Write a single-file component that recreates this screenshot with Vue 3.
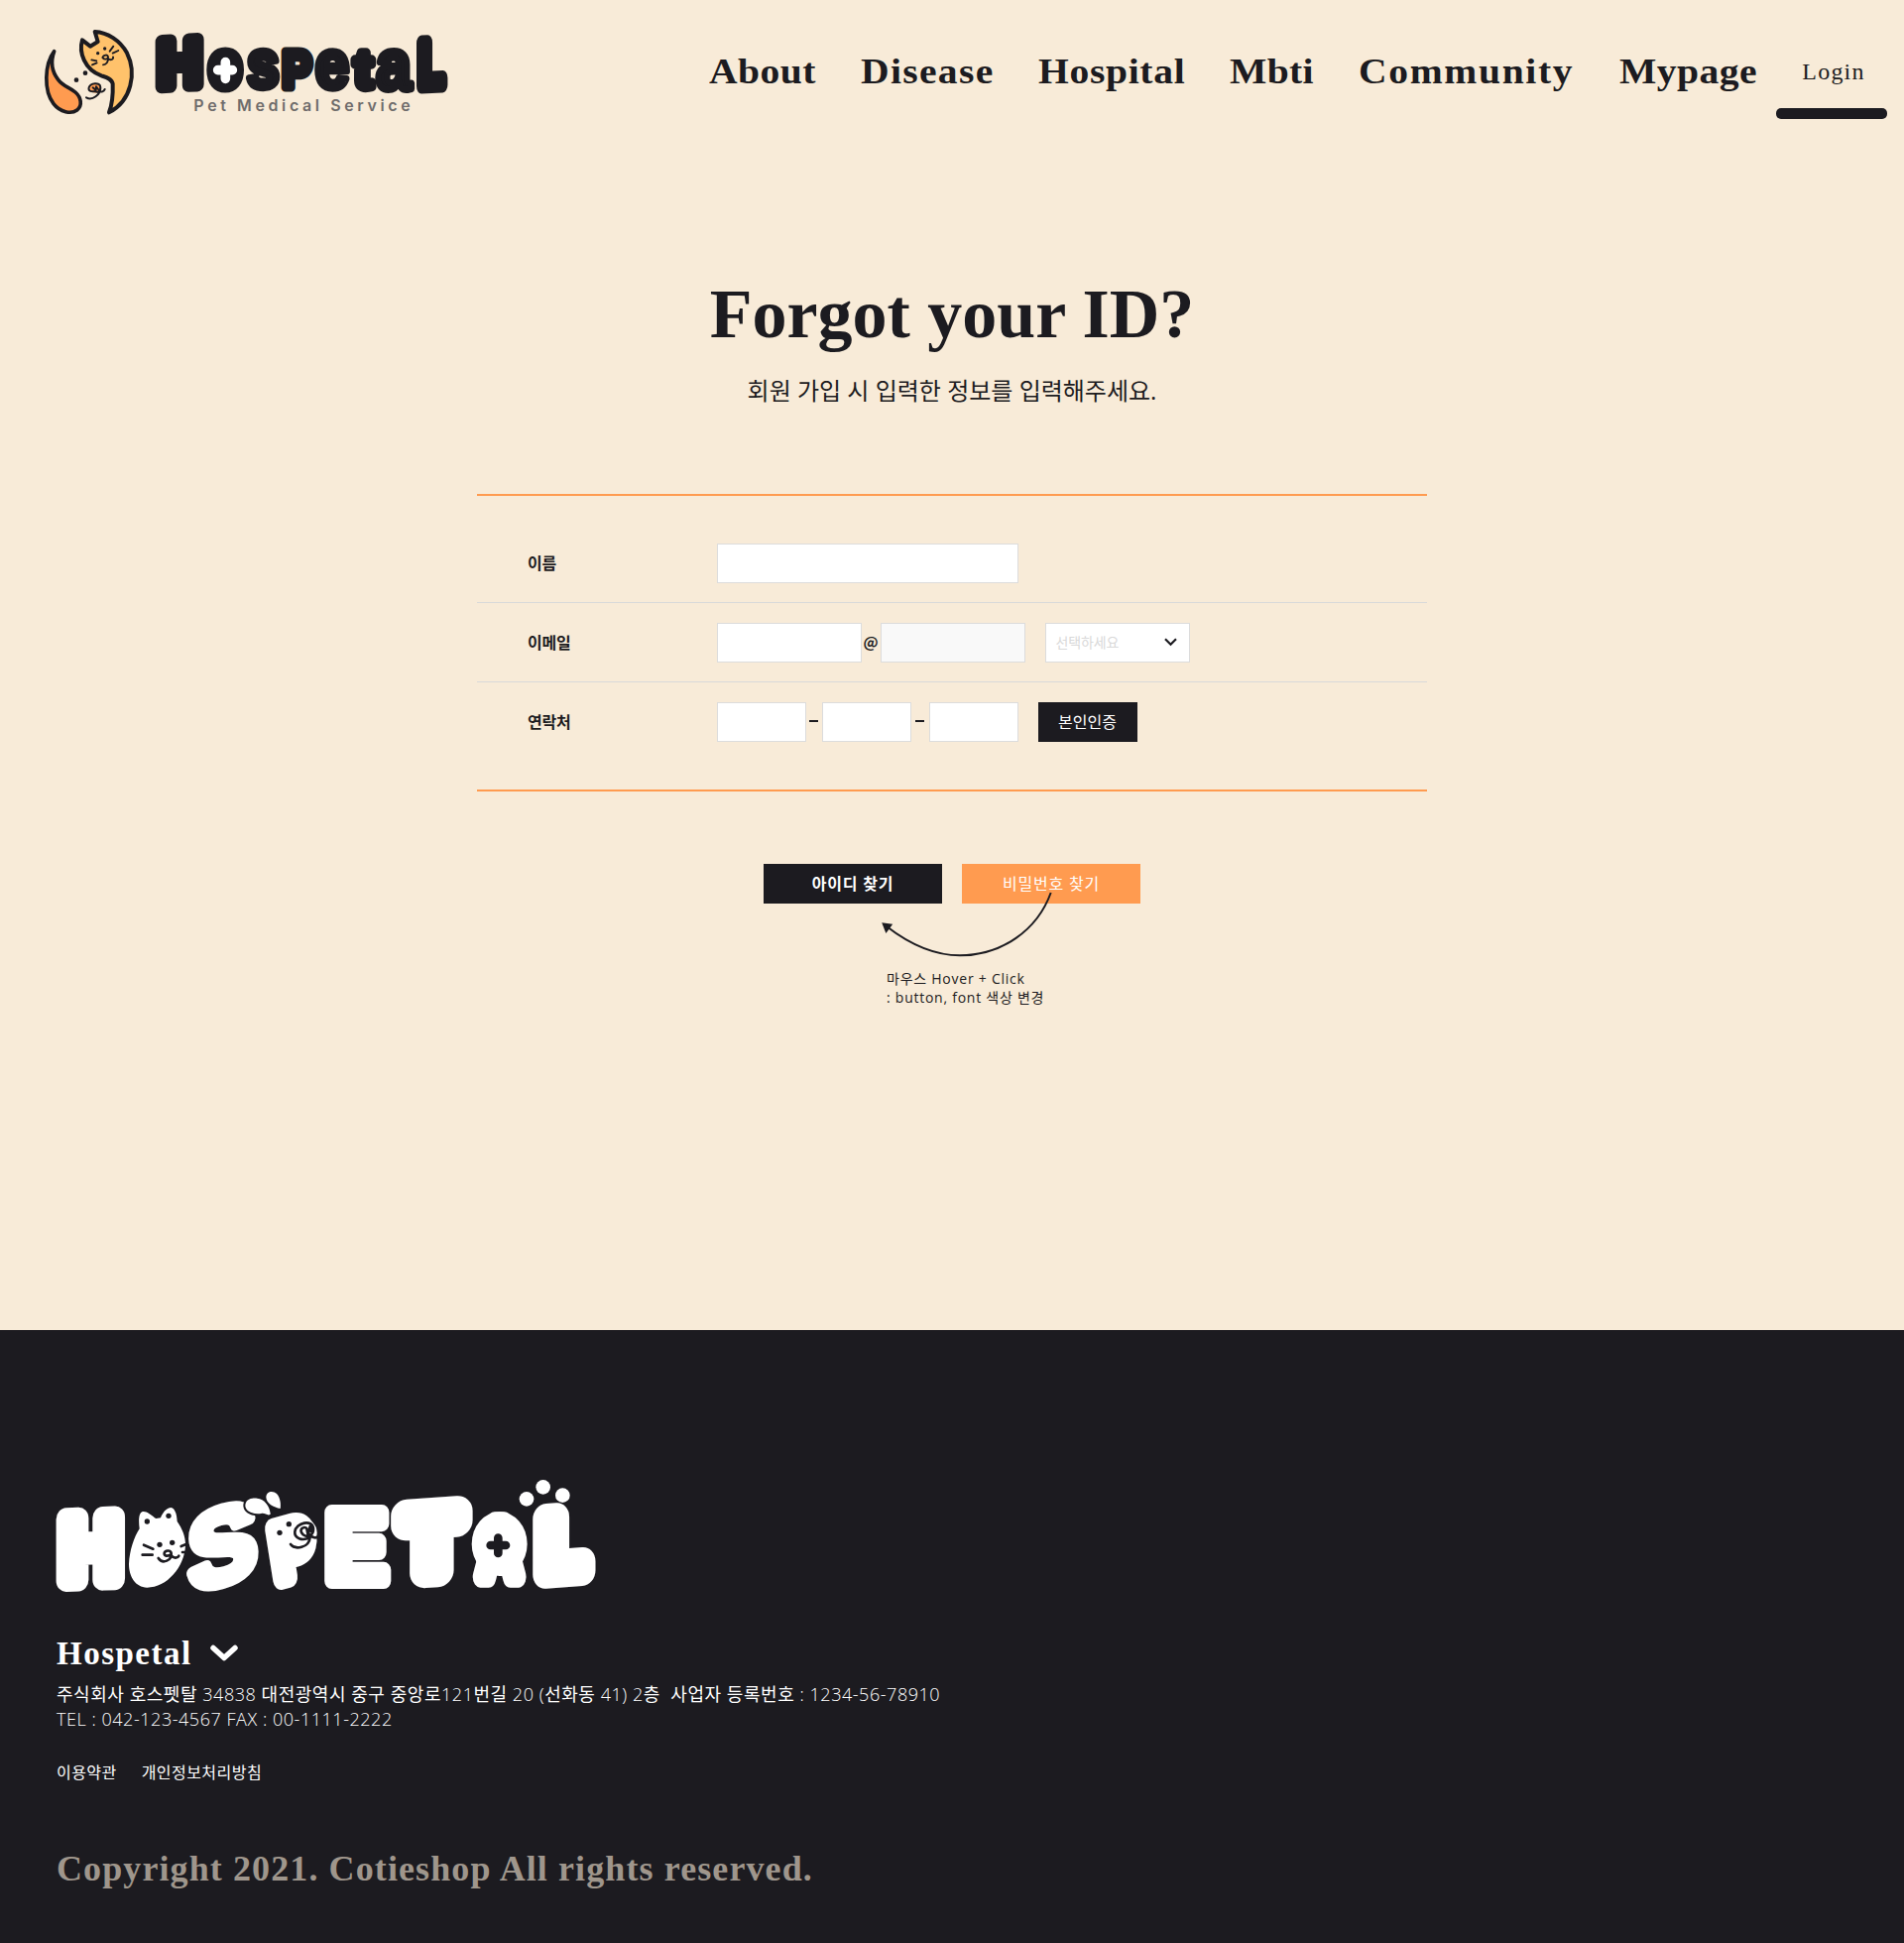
<script setup>
const navLinks = [
  { label: 'About', spacing: 0.4, width: 108 },
  { label: 'Disease', spacing: 1.2, width: 134 },
  { label: 'Hospital', spacing: 0.6, width: 148 },
  { label: 'Mbti', spacing: 0.3, width: 85 },
  { label: 'Community', spacing: 1.5, width: 218 },
  { label: 'Mypage', spacing: 0.4, width: 140 },
]

// Ink box of each glyph in em: left, right, top, bottom (baseline = 0)
const ink = {
  H: [0.067, 0.654, -0.688, 0],
  S: [0.04, 0.623, -0.698, 0.01],
  P: [0.067, 0.622, -0.688, 0],
  E: [0.067, 0.624, -0.688, 0],
  T: [0.021, 0.589, -0.688, 0],
  A: [0.006, 0.715, -0.688, 0],
  L: [0.067, 0.578, -0.688, 0],
  o: [0.04, 0.571, -0.539, 0.01],
  s: [0.026, 0.517, -0.539, 0.01],
  e: [0.04, 0.516, -0.539, 0.01],
  t: [0.017, 0.316, -0.652, 0.008],
  a: [0.039, 0.548, -0.539, 0.01],
}

// Scales one stroked letter so that it fills its box
function fit([ch, x0, y0, x1, y1, stroke, tilt = 0, turn = 0]) {
  const [l, r, t, b] = ink[ch]
  const size = 100
  const w = (r - l) * size
  const h = (b - t) * size
  const bw = x1 - x0
  const bh = y1 - y0
  const k = (bh - stroke) / h
  const sw = stroke / k
  const sx = bw / (w + sw)
  const sy = bh / (h + sw)
  const cx = (x0 + x1) / 2
  const cy = (y0 + y1) / 2
  const gx = ((l + r) / 2) * size
  const gy = ((t + b) / 2) * size
  return {
    ch,
    sw,
    transform: `translate(${cx} ${cy}) rotate(${turn}) skewY(${tilt}) scale(${sx} ${sy}) translate(${-gx} ${-gy})`,
  }
}

const headerLetters = [
  ['H', 380, 57, 527, 235, 42, -3],
  ['o', 535, 96, 648, 235, 36],
  ['s', 652, 97, 757, 233, 22],
  ['P', 761, 98, 858, 232, 27],
  ['e', 862, 98, 968, 233, 20],
  ['t', 971, 100, 1048, 233, 28],
  ['a', 1047, 98, 1162, 237, 21],
  ['L', 1170, 60, 1264, 237, 46, -3],
].map(fit)

const footerLetters = [
  ['H', 50, 148, 258, 402, 68, -2],
  ['S', 445, 138, 660, 397, 34, -14, -2],
  ['P', 692, 168, 842, 386, 62, -6, -9],
  ['E', 862, 144, 1062, 397, 48],
  ['T', 1065, 120, 1307, 392, 96, -4],
  ['A', 1307, 164, 1475, 392, 64],
  ['L', 1492, 134, 1681, 391, 90, -4],
].map(fit)

const rows = [
  { key: 'name', label: '이름' },
  { key: 'email', label: '이메일' },
  { key: 'phone', label: '연락처' },
]

// Hangul is set in the regular weight, digits and Latin in light
const companyInfo =
  '주식회사 호스펫탈 34838 대전광역시 중구 중앙로121번길 20 (선화동 41) 2층\u00a0 사업자 등록번호 : 1234-56-78910'
const companyRuns = companyInfo.split(/([가-힣]+)/).filter(Boolean)
const isHangul = (s) => /[가-힣]/.test(s)
</script>

<template>
  <div class="page">
    <header class="header">
      <svg class="brand" viewBox="0 0 1320 345" role="img" aria-label="Hospetal">
        <g transform="translate(30 15)" stroke="#1c1b20" stroke-linecap="round" stroke-linejoin="round">
          <path d="M44 95 C14 135 12 215 42 254 C62 280 96 286 113 273 C130 259 126 235 108 219 C91 204 72 202 56 181 C37 157 31 131 44 95Z" fill="#ff9b50" stroke-width="11" />
          <path d="M129 61 L153 80 L176 66 L167 36 C205 38 243 62 264 100 C294 160 278 245 210 280 C221 251 222 220 221 193 C218 178 202 174 187 169 C135 150 118 98 129 61Z" fill="#ffc26b" stroke-width="12" />
          <g fill="none" stroke-width="5.5">
            <path d="M212 95 L223 80 M221 101 L238 93 M157 121 L172 124 M159 136 L173 130" />
            <path d="M190 114 C194 104 207 105 207 112 C207 119 197 122 191 115 M207 113 C209 127 201 136 192 136 M207 118 C216 124 224 119 222 112" />
          </g>
          <g fill="#1c1b20" stroke="none">
            <circle cx="176" cy="101" r="5" /><circle cx="197" cy="87" r="5" />
            <circle cx="111" cy="182" r="7" /><circle cx="138" cy="161" r="7" />
          </g>
          <ellipse cx="168" cy="207" rx="16" ry="14" fill="#ff9b50" stroke="none" />
          <path d="M168 216 C158 218 146 217 149 205 C153 190 183 187 184 204 C184 218 174 221 168 216 M161 205 L170 213 L171 202 L177 210 M184 206 C184 225 160 246 141 235 M179 215 C187 220 194 217 197 210" fill="none" stroke-width="6" />
        </g>
        <g class="blob blob-dark">
          <text v-for="(g, i) in headerLetters" :key="i" :transform="g.transform" :stroke-width="g.sw">{{ g.ch }}</text>
        </g>
        <ellipse cx="592" cy="166" rx="26" ry="36" fill="#1c1b20" />
        <path d="M592 143 V193 M569 167 H613" stroke="#fff" stroke-width="29" stroke-linecap="round" />
        <text class="tagline" x="496" y="292" textLength="655">Pet Medical Service</text>
      </svg>

      <nav class="nav">
        <a v-for="l in navLinks" :key="l.label" class="nav-link" :style="{ width: l.width + 'px', letterSpacing: l.spacing + 'px' }"><span>{{ l.label }}</span></a>
      </nav>
      <a class="login"><span>Login</span><i class="login-bar"></i></a>
    </header>

    <main class="main">
      <h1 class="title">Forgot your ID?</h1>
      <p class="subtitle">회원 가입 시 입력한 정보를 입력해주세요.</p>

      <form class="form" @submit.prevent>
        <div v-for="row in rows" :key="row.key" class="row">
          <label class="label">{{ row.label }}</label>
          <div v-if="row.key === 'name'" class="fields">
            <input class="input wide" type="text" />
          </div>
          <div v-else-if="row.key === 'email'" class="fields">
            <input class="input medium" type="text" />
            <span class="at">@</span>
            <input class="input medium muted" type="text" />
            <div class="input medium select">
              <span>선택하세요</span>
              <svg width="13" height="9" viewBox="0 0 13 9"><path d="M1 1.2 L6.5 6.8 L12 1.2" fill="none" stroke="#1c1b20" stroke-width="2.2" /></svg>
            </div>
          </div>
          <div v-else class="fields">
            <input class="input small" type="text" />
            <span class="dash first"><i></i></span>
            <input class="input small" type="text" />
            <span class="dash"><i></i></span>
            <input class="input small" type="text" />
            <button class="verify" type="button">본인인증</button>
          </div>
        </div>
      </form>

      <div class="actions">
        <button class="action primary" type="button">아이디 찾기</button>
        <button class="action accent" type="button">비밀번호 찾기</button>
        <svg class="arrow" width="190" height="76" viewBox="880 895 190 76">
          <path d="M1059.7 900 C1046 938 1010 963.3 968 963.3 C941 963.3 916 951 894 934" fill="none" stroke="#1c1b20" stroke-width="2" />
          <path d="M889.2 930.2 L900.2 931.8 L893.4 941Z" fill="#1c1b20" />
        </svg>
      </div>
      <p class="note">마우스 Hover + Click<br />: button, font 색상 변경</p>
    </main>

    <footer class="footer">
      <svg class="footer-logo" viewBox="0 0 1800 450" role="img" aria-label="Hospetal">
        <g class="blob blob-light">
          <text v-for="(g, i) in footerLetters" :key="i" :transform="g.transform" :stroke-width="g.sw">{{ g.ch }}</text>
        </g>
        <!-- cat -->
        <path d="M302 214 C299 190 299 165 312 162 C326 160 340 176 352 183 L366 181 C372 164 385 150 397 150 C409 151 415 170 416 192 C432 215 442 240 441 265 C438 330 385 392 325 392 C290 390 270 360 270 320 C272 280 285 240 302 214Z" fill="#fff" />
        <g fill="#1c1b20">
          <circle cx="325" cy="192" r="8" /><circle cx="390" cy="175" r="8" />
          <circle cx="363" cy="262" r="8" /><circle cx="401" cy="256" r="8" />
        </g>
        <g fill="none" stroke="#1c1b20" stroke-width="8" stroke-linecap="round" stroke-linejoin="round">
          <path d="M315 263 L343 275 M311 293 H341 M428 267 L441 262 M432 285 H441" />
          <path d="M398 291 C388 299 376 297 377 288 C379 279 396 277 398 288 C401 310 372 322 359 303 M398 295 C405 305 418 303 421 296" />
        </g>
        <!-- pig -->
        <ellipse cx="795" cy="226" rx="44" ry="44" fill="#fff" />
        <g fill="#1c1b20"><circle cx="726" cy="226" r="8" /><circle cx="754" cy="200" r="8" /></g>
        <g fill="#fff" stroke="#1c1b20" stroke-width="12" paint-order="stroke">
          <path d="M622 145 C622 126 640 120 658 122 C680 124 697 146 698 170 C690 177 682 165 670 168 C648 171 624 164 622 145Z" />
          <path d="M685 118 C686 100 706 98 717 108 C728 120 730 138 728 153 C708 150 685 138 685 118Z" />
        </g>
        <path d="M816 241 C795 252 770 243 772 223 C775 195 826 184 828 214 C829 236 808 241 797 232 C780 216 801 204 808 213 L812 234 L818 207 L823 224 M818 232 C827 243 837 243 843 237 M818 240 C815 273 772 278 759 261" fill="none" stroke="#1c1b20" stroke-width="8" stroke-linecap="round" stroke-linejoin="round" />
        <!-- pads and cross -->
        <ellipse cx="1391" cy="260" rx="84" ry="97" fill="#fff" />
        <path d="M1387 242 V288 M1364 264 H1410" stroke="#1c1b20" stroke-width="26" stroke-linecap="round" />
        <g fill="#fff">
          <circle cx="1473" cy="124" r="22" /><circle cx="1523" cy="88" r="22" /><circle cx="1582" cy="113" r="22" />
        </g>
      </svg>

      <div class="company">
        <span>Hospetal</span>
        <svg width="28" height="18" viewBox="0 0 28 18"><path d="M3 3.5 L14 13.5 L25 3.5" fill="none" stroke="#fff" stroke-width="5.5" stroke-linecap="round" stroke-linejoin="round" /></svg>
      </div>
      <address class="address">
        <div><span v-for="(run, i) in companyRuns" :key="i" :class="{ hangul: isHangul(run) }">{{ run }}</span></div>
        <div>TEL : 042-123-4567 FAX : 00-1111-2222</div>
      </address>
      <div class="links"><a>이용약관</a><a>개인정보처리방침</a></div>
      <p class="copyright">Copyright 2021. Cotieshop All rights reserved.</p>
    </footer>
  </div>
</template>

<style>
body {
  margin: 0;
  background: #f8ebd8;
}
</style>

<style scoped>
.page {
  width: 1920px;
  height: 1959px;
  display: flex;
  flex-direction: column;
  overflow: hidden;
  background: #f8ebd8;
  color: #1c1b20;
  font-family: 'Open Sans', 'Noto Sans CJK KR', sans-serif;
}
.page * {
  box-sizing: border-box;
}
.header {
  display: flex;
  align-items: flex-start;
  height: 146px;
  padding: 15px 17px 0 30px;
}
.brand {
  width: 440px;
  height: 115px;
  flex: none;
}
.blob text {
  font: bold 100px 'Liberation Sans', sans-serif;
  stroke-linejoin: round;
}
.blob-dark {
  fill: #1c1b20;
  stroke: #1c1b20;
}
.blob-light {
  fill: #fff;
  stroke: #fff;
}
.tagline {
  font: 600 48px Inter, sans-serif;
  fill: #6f6c6b;
}
.nav {
  display: flex;
  gap: 45px;
  margin-left: auto;
  padding-top: 37px;
}
.nav-link {
  font: bold 36px/40px 'Liberation Serif', serif;
  white-space: nowrap;
}
.nav-link span {
  display: inline-block;
  transform: scaleX(1.1);
  transform-origin: left;
}
.login {
  display: flex;
  flex-direction: column;
  align-items: center;
  width: 112px;
  margin-left: 18px;
  padding-top: 37px;
  font: 24px/40px 'Liberation Serif', serif;
  letter-spacing: 1.2px;
}
.login span {
  padding-left: 4px;
}
.login-bar {
  width: 112px;
  height: 11px;
  margin-top: 17px;
  border-radius: 5px;
  background: #1c1b20;
}
.main {
  display: flex;
  flex-direction: column;
  align-items: center;
  height: 1195px;
}
.title {
  margin: 131px 0 0;
  font: bold 70px/80px 'Liberation Serif', serif;
  letter-spacing: 0;
}
.subtitle {
  margin: 17px 0 0;
  font-size: 24px;
  line-height: 40px;
}
.form {
  width: 958px;
  margin-top: 84px;
  padding: 28px 0;
  border-top: 2px solid #ff9b50;
  border-bottom: 2px solid #ff9b50;
}
.row {
  display: flex;
  align-items: center;
  height: 80px;
  padding-left: 51px;
  border-bottom: 1px solid #d9d9d9;
}
.row:last-child {
  border-bottom: 0;
}
.label {
  width: 190.5px;
  padding-bottom: 2px;
  font-size: 16px;
  font-weight: 700;
  letter-spacing: -0.2px;
}
.fields {
  display: flex;
  align-items: center;
}
.input {
  height: 40px;
  padding: 0 10px;
  border: 1px solid #dcdcdc;
  border-radius: 0;
  background: #fff;
}
.wide {
  width: 304px;
}
.medium {
  width: 146px;
}
.small {
  width: 90px;
}
.muted {
  background: #f9f9f9;
}
.at {
  width: 19px;
  padding-bottom: 2px;
  text-align: center;
  font: 700 15px 'Noto Sans CJK KR', sans-serif;
}
.select {
  display: flex;
  align-items: center;
  justify-content: space-between;
  margin-left: 20px;
  padding: 0 12px 1px 10px;
  color: #d9d9d9;
  font-size: 14px;
  letter-spacing: -0.1px;
}
.dash {
  display: flex;
  justify-content: center;
  width: 18px;
}
.dash.first {
  width: 16px;
}
.dash i {
  width: 9px;
  height: 2px;
  margin-bottom: 2px;
  background: #1c1b20;
}
.verify {
  width: 100px;
  height: 40px;
  margin-left: 20px;
  padding: 0 0 2px;
  border: 0;
  background: #1c1b20;
  color: #fff;
  font: 16px 'Open Sans', 'Noto Sans CJK KR', sans-serif;
}
.actions {
  position: relative;
  display: flex;
  gap: 20px;
  margin-top: 73px;
}
.action {
  width: 180px;
  height: 40px;
  padding: 0 0 3px;
  border: 0;
  color: #fff;
  font: 16px 'Open Sans', 'Noto Sans CJK KR', sans-serif;
  letter-spacing: 0.8px;
}
.primary {
  background: #1c1b20;
  font-weight: 700;
}
.accent {
  background: #ff9b50;
}
.arrow {
  position: absolute;
  left: 110px;
  top: 24px;
}
.note {
  width: 172px;
  margin: 66px 0 0 40px;
  white-space: nowrap;
  font-size: 14px;
  line-height: 19px;
  letter-spacing: 0.75px;
}
.footer {
  flex: 1;
  padding: 129px 40px 0;
  background: #1c1b20;
  color: #fff;
}
.footer-logo {
  display: block;
  width: 600px;
  height: 150px;
}
.company {
  display: flex;
  align-items: center;
  gap: 18px;
  margin: 27px 0 0 17px;
  font: bold 33px/40px 'Liberation Serif', serif;
  letter-spacing: 1.5px;
}
.address {
  margin: 9px 0 0 17px;
  font-style: normal;
  font-weight: 300;
  font-size: 18px;
  line-height: 25px;
  letter-spacing: 0.54px;
  white-space: nowrap;
}
.hangul {
  font-weight: 400;
}
.links {
  display: flex;
  gap: 25px;
  margin: 29px 0 0 17px;
  font-size: 16px;
  line-height: 24px;
  letter-spacing: 0.45px;
}
.copyright {
  margin: 65px 0 0 17px;
  font: bold 36px/40px 'Liberation Serif', serif;
  letter-spacing: 1.1px;
  color: #9f968c;
}
</style>
